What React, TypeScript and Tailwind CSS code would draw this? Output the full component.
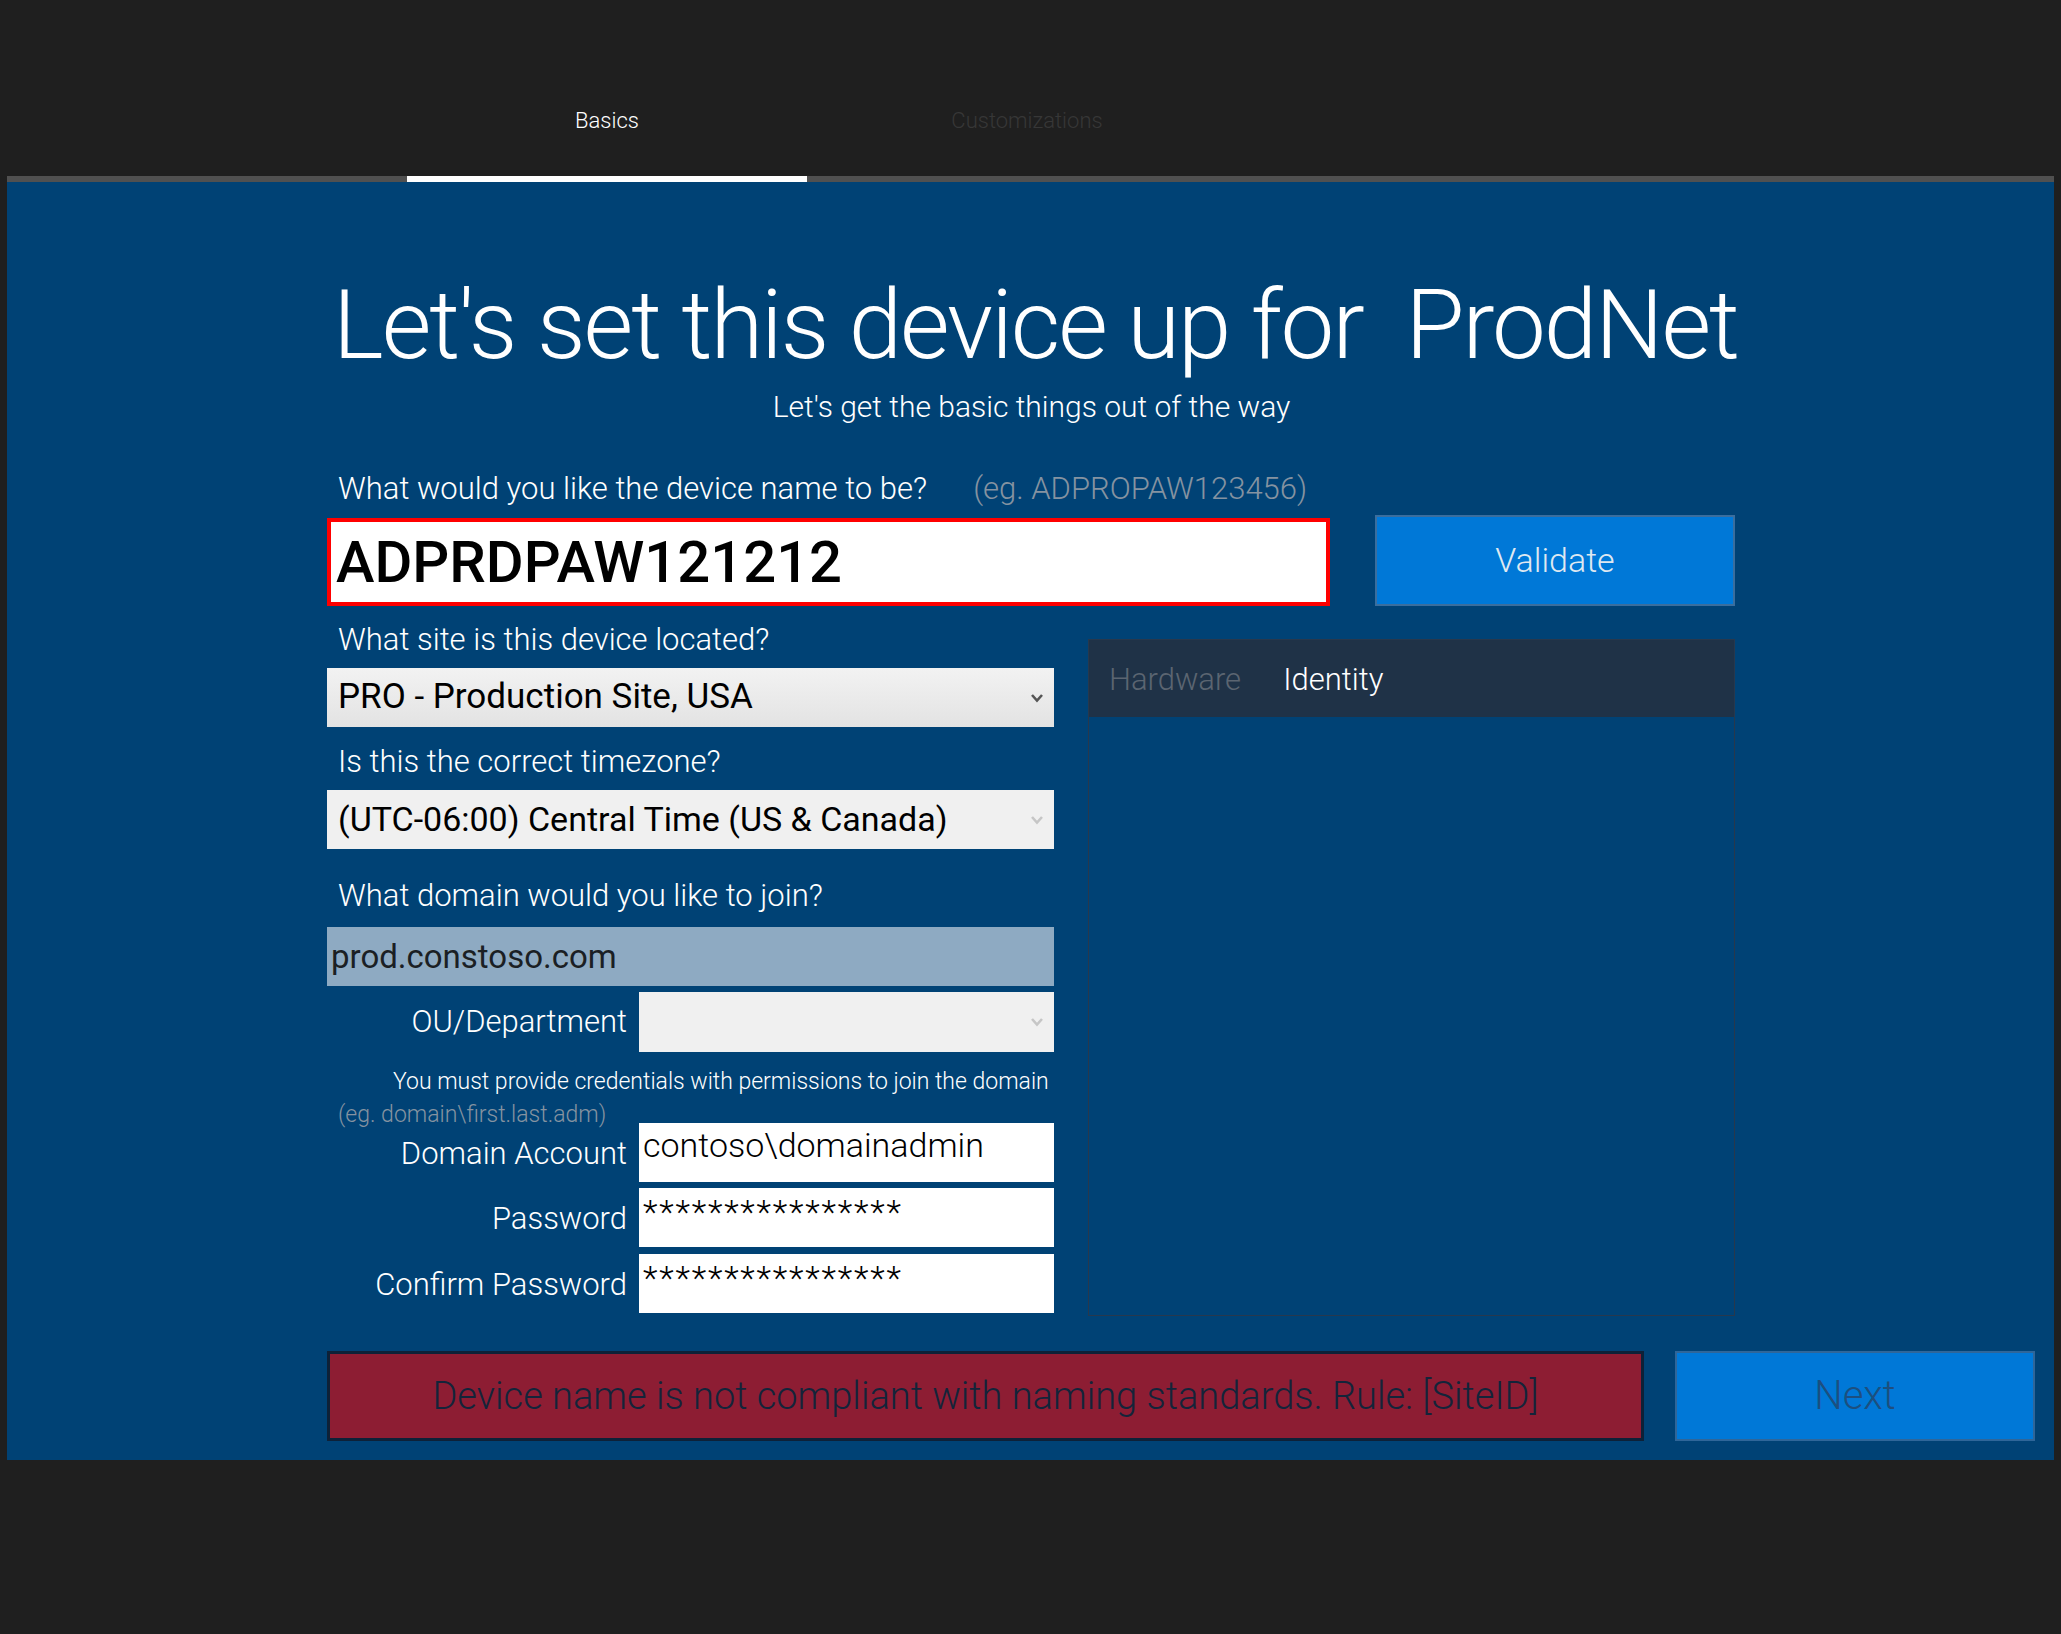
function Chevron({ light }: { light?: boolean }) {
  return (
    <svg width="14" height="10" viewBox="0 0 14 10" className="shrink-0">
      <path d="M2 2 L7 7.5 L12 2" fill="none" stroke={light ? '#c6c6c6' : '#555555'} strokeWidth="2.6" />
    </svg>
  )
}

function FieldLabel({ text, className }: { text: string; className: string }) {
  return <div className={`pl-[11px] text-white text-[31px] leading-[56px] ${className}`}>{text}</div>
}

function CredRow({ label, value, masked }: { label: string; value: string; masked?: boolean }) {
  return (
    <div className="flex h-[59px]">
      <div className="w-[300px] pt-[3px] text-right text-white text-[31px] leading-[56px]">{label}</div>
      <div
        className={`ml-[12px] w-[415px] bg-white pl-[4px] text-black ${
          masked ? 'pt-[4px] text-[34px] leading-[40px] tracking-[1.8px]' : 'text-[34px] leading-[44px]'
        } font-light`}
      >
        {value}
      </div>
    </div>
  )
}

export default function App() {
  return (
    <div className="w-[2061px] h-[1634px] bg-[#1f1f1f] overflow-hidden font-['Roboto','Liberation_Sans',sans-serif] font-light">
      {/* step tabs */}
      <div className="h-[176px] flex pl-[407px] gap-5 pt-[105px]">
        <div className="w-[400px] text-center text-[22px] leading-[32px] text-white">Basics</div>
        <div className="w-[400px] text-center text-[22px] leading-[32px] text-[#373737]">Customizations</div>
      </div>

      <div className="ml-[7px] w-[2047px]">
        <div className="h-[6px] bg-[#505050] flex">
          <div className="ml-[400px] w-[400px] bg-white" />
        </div>

        <div className="h-[1278px] bg-[#004275] pt-[83px]">
          <h1 className="pl-[10px] text-center text-white text-[96px] leading-[120px] tracking-[-2px] font-light whitespace-pre">
            {"Let's set this device up for  ProdNet"}
          </h1>
          <p className="mt-[2px] pl-[2px] text-center text-white text-[30px] leading-[40px]">
            Let's get the basic things out of the way
          </p>

          <div className="ml-[320px] w-[1408px]">
            {/* device name */}
            <div className="mt-[42px] flex h-[40px] items-center text-[31px] leading-[40px]">
              <span className="pl-[11px] text-white">What would you like the device name to be?</span>
              <span className="ml-[46px] text-[#8593a1]">(eg. ADPROPAW123456)</span>
            </div>
            <div className="mt-[6px] flex items-end">
              <div className="w-[1003px] h-[88px] border-[4px] border-[#ff0000] bg-white flex items-center pl-[5px]">
                <span className="text-black text-[58px] font-medium leading-none">ADPRDPAW121212</span>
              </div>
              <button className="ml-[45px] w-[360px] h-[91px] bg-[#0078d7] border-2 border-[#3a6e9e] text-[#dfe8f1] text-[34px] font-light">
                Validate
              </button>
            </div>

            <div className="flex items-start">
              {/* left column */}
              <div className="w-[727px] flex flex-col">
                <FieldLabel text="What site is this device located?" className="mt-[6px] h-[56px]" />
                <div className="h-[59px] bg-gradient-to-b from-[#f2f2f2] to-[#e3e3e3] flex items-center justify-between pl-[11px] pr-[10px]">
                  <span className="text-black text-[35px] font-normal">PRO - Production Site, USA</span>
                  <Chevron />
                </div>
                <FieldLabel text="Is this the correct timezone?" className="h-[63px] pt-[7px]" />
                <div className="h-[59px] bg-[#f0f0f0] flex items-center justify-between pl-[11px] pr-[10px]">
                  <span className="text-black text-[34px] font-normal">(UTC-06:00) Central Time (US &amp; Canada)</span>
                  <Chevron light />
                </div>
                <FieldLabel text="What domain would you like to join?" className="h-[78px] pt-[19px]" />
                <div className="h-[59px] bg-[#8eaac2] flex items-center pl-[4px]">
                  <span className="text-[#1b1f24] text-[33px] font-normal">prod.constoso.com</span>
                </div>

                <div className="mt-[6px] flex h-[60px]">
                  <div className="w-[300px] pt-[2px] text-right text-white text-[31px] leading-[56px]">OU/Department</div>
                  <div className="ml-[12px] w-[415px] bg-[#f0f0f0] flex items-center justify-end pr-[10px]">
                    <Chevron light />
                  </div>
                </div>

                <div className="pt-[12px] pl-[66px] text-white text-[23px] leading-[36px]">
                  You must provide credentials with permissions to join the domain
                </div>
                <div className="h-[23px] pl-[11px] text-[#8593a1] text-[23px] leading-[30px]">
                  (eg. domain\first.last.adm)
                </div>

                <CredRow label="Domain Account" value="contoso\domainadmin" />
                <div className="h-[6px]" />
                <CredRow label="Password" value="****************" masked />
                <div className="h-[7px]" />
                <CredRow label="Confirm Password" value="****************" masked />
              </div>

              {/* right panel */}
              <div className="ml-[34px] mt-[33px] w-[647px] h-[677px] border border-[#27384d] flex flex-col">
                <div className="h-[77px] bg-[#1f3247] flex items-center pl-[20px] pt-[4px] text-[31px]">
                  <span className="text-[#5b6571]">Hardware</span>
                  <span className="ml-[42px] text-white">Identity</span>
                </div>
              </div>
            </div>
          </div>

          {/* status + next */}
          <div className="ml-[320px] mt-[35px] flex gap-[31px]">
            <div className="w-[1317px] h-[90px] border-[3px] border-[#0d2138] bg-[#8d1d33] flex items-center justify-center">
              <span className="text-[#13243a] text-[38px]">
                Device name is not compliant with naming standards. Rule: [SiteID]
              </span>
            </div>
            <button className="w-[360px] h-[90px] bg-[#0078d7] border-2 border-[#2f6699] text-[#1c4f7f] text-[40px] font-light">
              Next
            </button>
          </div>
        </div>
      </div>
    </div>
  )
}
